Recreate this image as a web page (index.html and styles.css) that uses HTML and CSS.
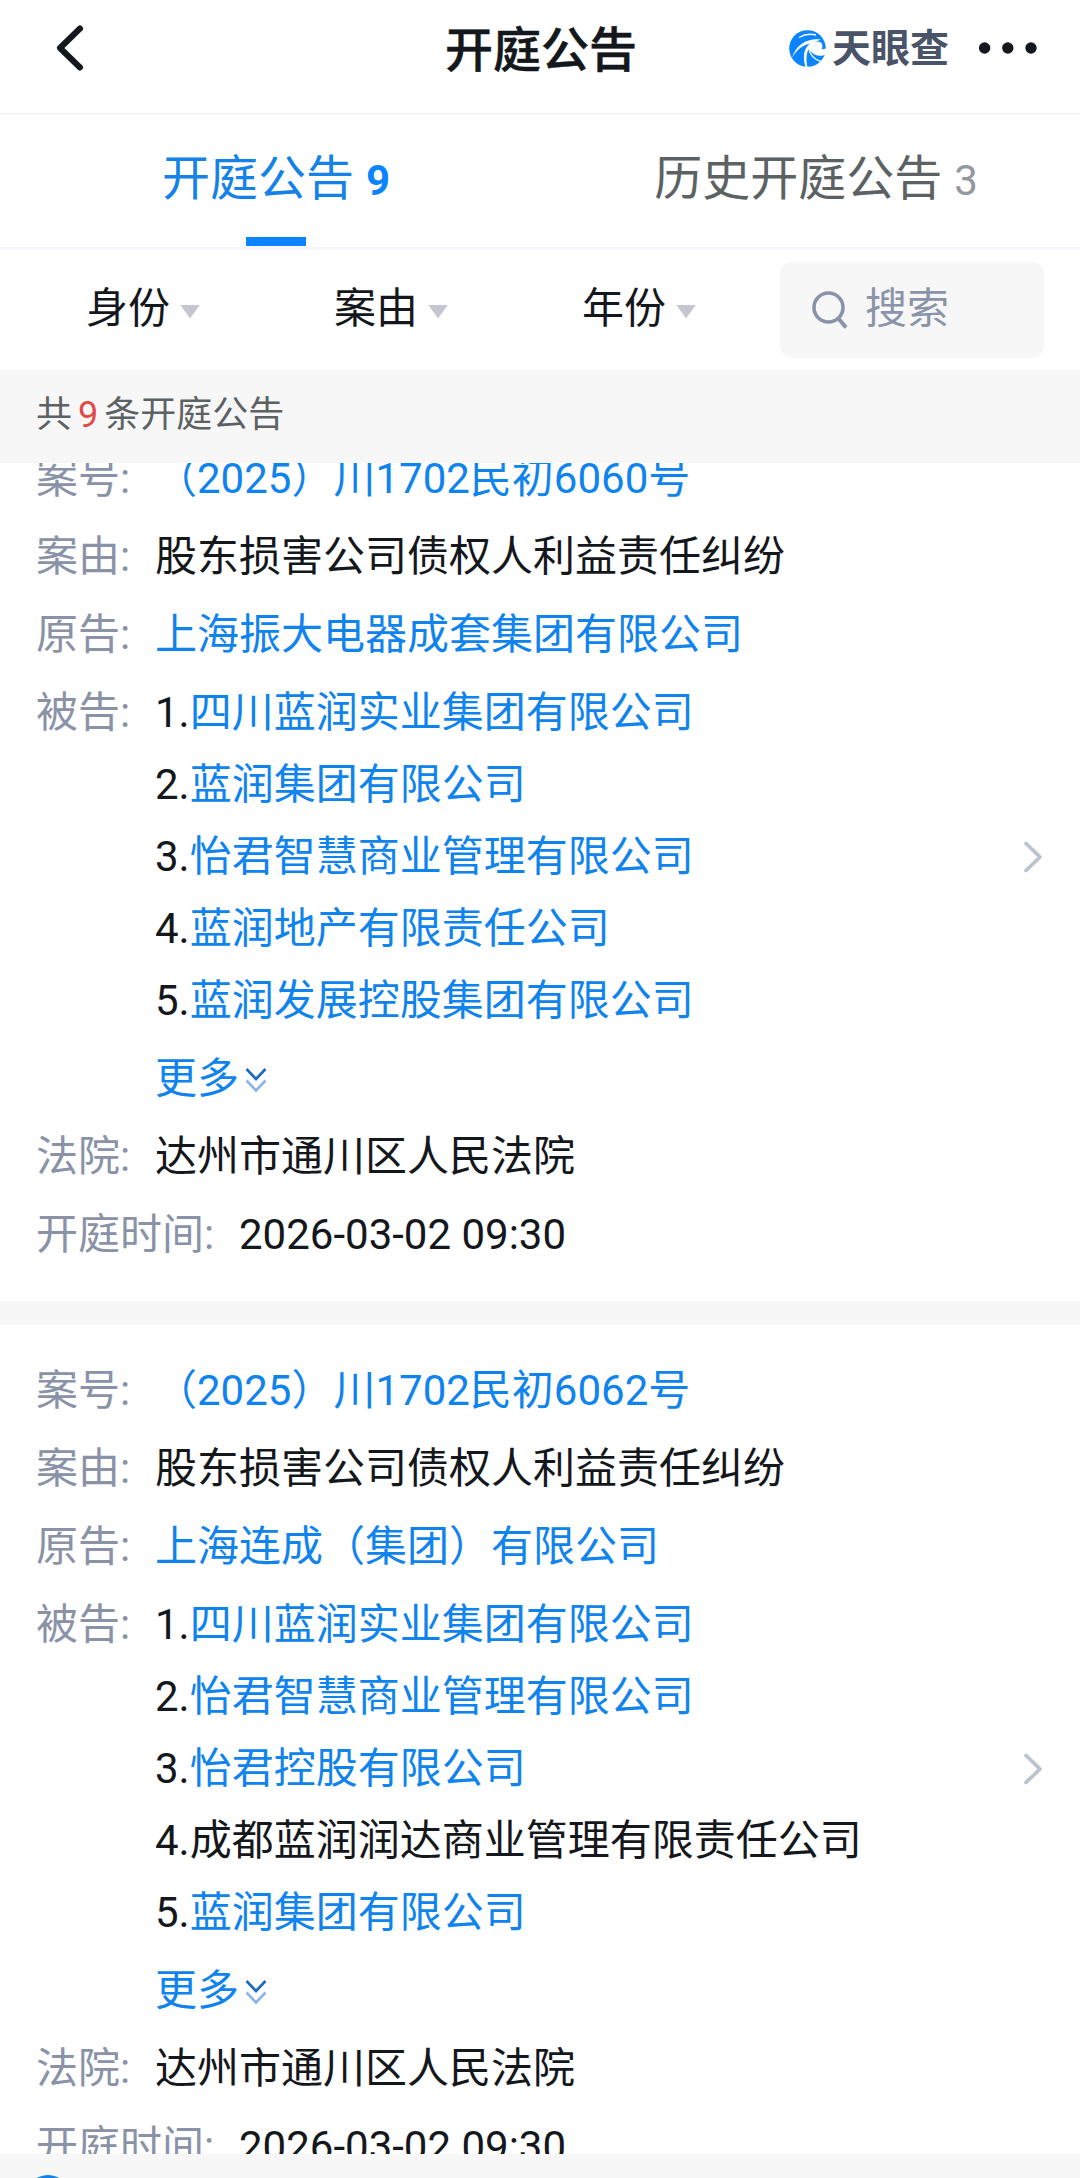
FILE: index.html
```html
<!DOCTYPE html>
<html lang="zh-CN">
<head>
<meta charset="utf-8">
<title>开庭公告</title>
<link rel="stylesheet" href="styles.css">
</head>
<body>
<div class="app">
  <header class="header">
    <svg class="back" width="36" height="48" viewBox="0 0 36 48"><path d="M27 4.500L7 24L27 43.500" fill="none" stroke="#14171b" stroke-width="6" stroke-linecap="round" stroke-linejoin="round"/></svg>
    <h1 class="title">开庭公告</h1>
    <div class="tools">
      <svg class="logo" width="37" height="37" viewBox="0 0 37 37">
        <circle cx="18.500" cy="18.500" r="18.300" fill="#0a84ff"/>
        <path d="M19.500 15C22 12 28 10.500 32 12.500C34 15 33.500 17.500 32.500 19.500L37.500 18.500V23.500C33 27.500 25 26.500 20.500 20C19.500 18.500 19 16.500 19.500 15Z" fill="#fff"/>
        <path d="M32 9.500C20 7.500 7 13.500 3 28C8 19 14.500 14.500 22 13.500Z" fill="#fff"/>
        <path d="M22 13C14.500 17.500 13.500 27 16.500 37L18.500 37C16.500 28 17.500 20 22 16Z" fill="#fff"/>
        <path d="M20 19C21 25 25.500 29.500 32 31.500M10 7.500C15 4.500 21 3.500 27 5" fill="none" stroke="#fff" stroke-width="1.400"/>
      </svg>
      <span class="brand">天眼查</span>
      <svg class="dots" width="60" height="14" viewBox="0 0 60 14" fill="#14171b"><circle cx="6.600" cy="7" r="5.700"/><circle cx="29.800" cy="7" r="5.700"/><circle cx="53" cy="7" r="5.700"/></svg>
    </div>
  </header>

  <nav class="tabs">
    <div class="tab active">开庭公告<b class="num">9</b></div>
    <div class="tab">历史开庭公告<span class="num">3</span></div>
  </nav>

  <div class="filters">
    <div class="filter">身份<i class="caret"></i></div>
    <div class="filter">案由<i class="caret"></i></div>
    <div class="filter">年份<i class="caret"></i></div>
    <div class="search">
      <svg width="38" height="40" viewBox="0 0 38 40" fill="none" stroke="#8a94a8" stroke-width="3.600"><circle cx="17.500" cy="17.500" r="14.500"/><path d="M27 28L35 37.500" stroke-width="4"/></svg>
      <span>搜索</span>
    </div>
  </div>

  <div class="summary">共<span class="count">9</span>条开庭公告</div>

  <main class="list">
    <article class="card">
      <div class="row"><span class="label">案号:</span><span class="value link">（2025）川1702民初6060号</span></div>
      <div class="row"><span class="label">案由:</span><span class="value">股东损害公司债权人利益责任纠纷</span></div>
      <div class="row"><span class="label">原告:</span><span class="value link">上海振大电器成套集团有限公司</span></div>
      <div class="row"><span class="label">被告:</span>
        <div class="value parties">
          <div>1.<span class="link">四川蓝润实业集团有限公司</span></div>
          <div>2.<span class="link">蓝润集团有限公司</span></div>
          <div>3.<span class="link">怡君智慧商业管理有限公司</span></div>
          <div>4.<span class="link">蓝润地产有限责任公司</span></div>
          <div>5.<span class="link">蓝润发展控股集团有限公司</span></div>
        </div>
      </div>
      <div class="row more"><span class="link">更多</span><svg width="22" height="26" viewBox="0 0 22 26" fill="none" stroke-width="2.600"><path d="M1.500 2L11 12L20.500 2" stroke="#1c69c2"/><path d="M1.500 13.500L11 23.500L20.500 13.500" stroke="#8fb6e6"/></svg></div>
      <div class="row"><span class="label">法院:</span><span class="value">达州市通川区人民法院</span></div>
      <div class="row"><span class="label wide">开庭时间:</span><span class="value">2026-03-02 09:30</span></div>
      <svg class="arrow" width="22" height="34" viewBox="0 0 22 34"><path d="M4 3.500L18 17L4 30.500" fill="none" stroke="#bcc2d0" stroke-width="3.800" stroke-linecap="round" stroke-linejoin="round"/></svg>
    </article>

    <article class="card">
      <div class="row"><span class="label">案号:</span><span class="value link">（2025）川1702民初6062号</span></div>
      <div class="row"><span class="label">案由:</span><span class="value">股东损害公司债权人利益责任纠纷</span></div>
      <div class="row"><span class="label">原告:</span><span class="value link">上海连成（集团）有限公司</span></div>
      <div class="row"><span class="label">被告:</span>
        <div class="value parties">
          <div>1.<span class="link">四川蓝润实业集团有限公司</span></div>
          <div>2.<span class="link">怡君智慧商业管理有限公司</span></div>
          <div>3.<span class="link">怡君控股有限公司</span></div>
          <div>4.成都蓝润润达商业管理有限责任公司</div>
          <div>5.<span class="link">蓝润集团有限公司</span></div>
        </div>
      </div>
      <div class="row more"><span class="link">更多</span><svg width="22" height="26" viewBox="0 0 22 26" fill="none" stroke-width="2.600"><path d="M1.500 2L11 12L20.500 2" stroke="#1c69c2"/><path d="M1.500 13.500L11 23.500L20.500 13.500" stroke="#8fb6e6"/></svg></div>
      <div class="row"><span class="label">法院:</span><span class="value">达州市通川区人民法院</span></div>
      <div class="row"><span class="label wide">开庭时间:</span><span class="value">2026-03-02 09:30</span></div>
      <svg class="arrow" width="22" height="34" viewBox="0 0 22 34"><path d="M4 3.500L18 17L4 30.500" fill="none" stroke="#bcc2d0" stroke-width="3.800" stroke-linecap="round" stroke-linejoin="round"/></svg>
    </article>
  </main>

  <footer class="footer"><div class="badge"></div></footer>
</div>
</body>
</html>
```

FILE: styles.css
```css
* {
  box-sizing: border-box;
}

body {
  margin: 0;
  background: #fff;
  color: #14171b;
  font-family: Roboto, "Noto Sans CJK SC", sans-serif;
  font-size: 42px;
  line-height: 60px;
  white-space: nowrap;
}

svg {
  display: block;
  flex: none;
}

.app {
  display: flex;
  flex-direction: column;
  width: 1080px;
  height: 2178px;
  overflow: hidden;
}

.header {
  flex: none;
  display: grid;
  grid-template-columns: 445px 192px 1fr;
  align-items: center;
  height: 114px;
  padding-bottom: 17px;
  border-bottom: 1px solid #f0f1f2;
}

.back {
  margin-left: 53px;
}

.title {
  margin: 0;
  padding-top: 5px;
  font-size: 48px;
  font-weight: 500;
  -webkit-text-stroke: 0.5px currentColor;
}

.tools {
  display: flex;
  align-items: center;
  padding-left: 152px;
}

.brand {
  width: 117px;
  margin-left: 6px;
  padding-top: 2px;
  color: #4a5468;
  font-size: 39px;
  font-weight: 700;
}

.dots {
  margin-left: 29px;
}

.tabs {
  flex: none;
  display: grid;
  grid-template-columns: 552px 528px;
  height: 136px;
  border-bottom: 3px solid #f4f6f9;
}

.tab {
  display: flex;
  justify-content: center;
  align-items: center;
  height: 133px;
  padding-bottom: 4px;
  color: #5c6264;
  font-size: 48px;
}

.tab .num {
  margin-left: 12px;
  padding-top: 4px;
  color: #94989e;
  font-size: 42px;
}

.tab.active {
  color: #1482e8;
  background: linear-gradient(#0a84ff, #0a84ff) center bottom 1px / 60px 9px no-repeat;
}

.tab.active .num {
  color: #0a84ff;
}

.filters {
  flex: none;
  display: flex;
  align-items: center;
  height: 120px;
  padding: 0 36px 0 86px;
}

.filter {
  display: flex;
  align-items: center;
  width: 248px;
  padding-bottom: 3px;
}

.filter:nth-child(3) {
  width: 198px;
}

.caret {
  width: 20px;
  height: 14px;
  margin: 6px 0 0 10px;
  background: #c5c6d0;
  clip-path: polygon(0 0, 100% 0, 50% 100%);
}

.search {
  display: flex;
  align-items: center;
  flex: 1;
  height: 96px;
  padding-left: 31px;
  gap: 16px;
  border-radius: 12px;
  background: #f7f7f8;
  color: #8a94a8;
}

.search span {
  padding-bottom: 3px;
}

.summary {
  flex: none;
  height: 93px;
  padding-left: 36px;
  background: #f7f7f8;
  color: #5c6264;
  font-size: 36px;
  line-height: 90px;
}

.count {
  margin: 0 6px;
  color: #e24a48;
}

.list {
  flex: 1;
  min-height: 0;
  display: flex;
  flex-direction: column;
  justify-content: flex-end;
  gap: 24px;
  overflow: hidden;
  background: #f7f7f8;
}

.card {
  position: relative;
  flex: none;
  display: flex;
  flex-direction: column;
  gap: 18px;
  height: 888px;
  padding: 36px 36px 0;
  background: #fff;
}

.card:last-child {
  margin-bottom: -59px;
}

.row {
  display: flex;
}

.label {
  width: 119px;
  color: #8a92a8;
}

.label.wide {
  width: 203px;
}

.link {
  color: #0f83ee;
}

.parties {
  display: flex;
  flex-direction: column;
  gap: 12px;
}

.more {
  align-items: center;
  padding-left: 119px;
  gap: 6px;
}

.more svg {
  margin-top: 2px;
}

.arrow {
  position: absolute;
  top: 427px;
  right: 36px;
}

.footer {
  flex: none;
  height: 24px;
  padding: 21px 0 0 26px;
  overflow: hidden;
  background: #f7f7f8;
}

.badge {
  width: 44px;
  height: 44px;
  border-radius: 50%;
  background: #1080f0;
}
```
